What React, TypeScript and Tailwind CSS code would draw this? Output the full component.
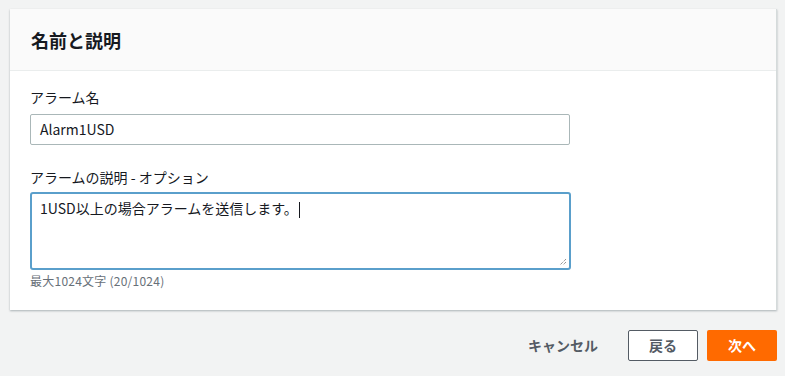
import React from 'react';

const font = { fontFamily: '"Noto Sans CJK JP", "Noto Sans", "Liberation Sans", sans-serif' };

const ResizeGrip = () => (
  <svg className="absolute right-[2px] bottom-[2px]" width="8" height="8" viewBox="0 0 8 8">
    <path d="M7 1 L1 7 M7 4 L4 7" stroke="#6b6b6b" strokeWidth="1" strokeDasharray="1 1" fill="none" />
  </svg>
);

const App: React.FC = () => {
  return (
    <div className="w-[785px] h-[376px] bg-[#f2f3f3] overflow-hidden pt-[9px]" style={font}>
      {/* Card */}
      <div className="ml-[10px] w-[767px] bg-white border-r border-[#d5dbdb] shadow-[0_1px_2px_rgba(0,28,36,0.3)]">
        <div className="h-[62px] bg-[#fafafa] border-b border-[#eaeded] px-[21px] flex items-center">
          <h2 className="text-[18px] font-bold text-[#16191f] leading-none">名前と説明</h2>
        </div>
        <div className="px-[20px] pt-[16px] pb-[21px]">
          <div className="text-[14px] text-[#16191f] leading-[20px] mb-[7px]">アラーム名</div>
          <div className="w-[540px] h-[31px] border border-[#aab7b8] rounded-[2px] px-[9px] flex items-center text-[14px] text-[#16191f]">
            Alarm1USD
          </div>
          <div className="text-[14px] text-[#16191f] leading-[20px] mt-[22px] mb-[5px]">アラームの説明 - オプション</div>
          <div className="relative w-[541px] h-[78px] border-2 border-[#5a9fcb] rounded-[3px] px-[8px] pt-[4px] text-[14px] text-[#16191f]">
            <span>1USD以上の場合アラームを送信します。</span>
            <span className="inline-block w-px h-[16px] bg-[#16191f] align-middle ml-[1px]" />
            <ResizeGrip />
          </div>
          <div className="text-[12px] text-[#687078] leading-[16px] mt-[3px] tracking-[0.02em]">最大1024文字 (20/1024)</div>
        </div>
      </div>
      {/* Actions */}
      <div className="ml-[10px] w-[767px] mt-[20px] flex justify-end items-center">
        <button className="text-[14px] font-bold text-[#545b64] mr-[30px]">キャンセル</button>
        <button className="w-[70px] h-[31px] border border-[#545b64] rounded-[2px] bg-white text-[14px] font-bold text-[#545b64] mr-[9px]">
          戻る
        </button>
        <button className="w-[70px] h-[31px] rounded-[2px] bg-[#ff6a00] text-[14px] font-bold text-white">
          次へ
        </button>
      </div>
    </div>
  );
};

export default App;
